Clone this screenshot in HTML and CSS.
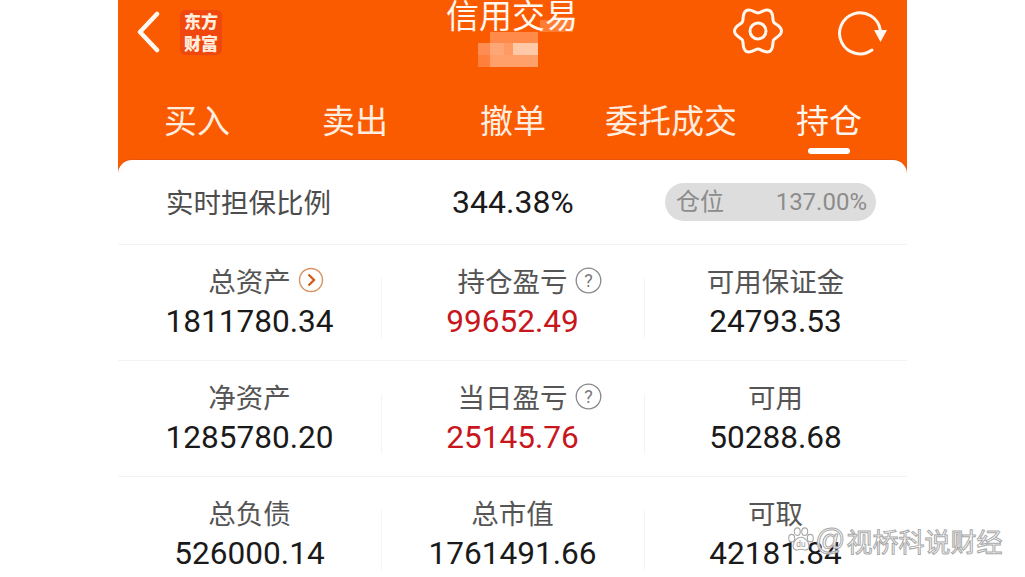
FILE: index.html
```html
<!DOCTYPE html>
<html lang="zh-CN">

<head>
    <meta charset="UTF-8">
    <title>信用交易</title>
    <link rel="stylesheet" href="styles.css">
</head>

<body>
    <div class="phone">
        <div class="header">
            <div class="top-bar">
                <div class="top-left">
                    <svg class="back" width="26" height="42" viewBox="0 0 26 42">
                        <path d="M21 3 L4 21 L21 39" fill="none" stroke="#fff7f0" stroke-width="4.5" stroke-linecap="round" stroke-linejoin="round"/>
                    </svg>
                    <div class="logo">东方<br>财富</div>
                </div>
                <div class="title-box">
                    <div class="title">信用交易</div>
                    <svg class="mosaic" width="98" height="47" viewBox="0 0 98 47">
                        <rect x="62" y="0" width="33" height="12" fill="#ff7d33"/>
                        <rect x="12" y="12" width="48" height="11" fill="#ff8a4a"/>
                        <rect x="0" y="23" width="12" height="12" fill="#ff8c52"/>
                        <rect x="12" y="23" width="14" height="12" fill="#ffa676"/>
                        <rect x="26" y="23" width="9" height="12" fill="#ff9a62"/>
                        <rect x="35" y="23" width="25" height="12" fill="#ffc8a6"/>
                        <rect x="0" y="35" width="12" height="12" fill="#ff7f3c"/>
                        <rect x="12" y="35" width="48" height="12" fill="#ffa06a"/>
                    </svg>
                </div>
                <div class="top-right">
                    <svg width="52" height="52" viewBox="-26 -26 52 52">
                        <path d="M23.5 0 C23.5,5 17.09,6.4 15.59,9 S16.08,17.85 11.75,20.35 S3,18 0,18 S-7.42,22.85 -11.75,20.35 S-14.09,11.6 -15.59,9 S-23.5,5 -23.5,0 S-17.09,-6.4 -15.59,-9 S-16.08,-17.85 -11.75,-20.35 S-3,-18 0,-18 S7.42,-22.85 11.75,-20.35 S14.09,-11.6 15.59,-9 S23.5,-5 23.5,0 Z" fill="none" stroke="#fff7f0" stroke-width="3" stroke-linejoin="round"/>
                        <circle r="8" fill="none" stroke="#fff7f0" stroke-width="3"/>
                    </svg>
                    <svg width="54" height="52" viewBox="0 0 54 52">
                        <path d="M38 45 A20.5 20.5 0 1 1 46.3 25" fill="none" stroke="#fff7f0" stroke-width="3" stroke-linecap="round"/>
                        <path d="M40 25 L53 25 L46.5 37 Z" fill="#fff7f0"/>
                    </svg>
                </div>
            </div>
            <div class="tabs">
                <div class="tab">买入</div>
                <div class="tab">卖出</div>
                <div class="tab">撤单</div>
                <div class="tab">委托成交</div>
                <div class="tab active">持仓</div>
            </div>
        </div>

        <div class="card">
            <div class="ratio-row">
                <div class="ratio-label">实时担保比例</div>
                <div class="ratio-value">344.38%</div>
                <div class="pill"><span class="pill-name">仓位</span><span>137.00%</span></div>
            </div>

            <div class="stat-row">
                <div class="stat">
                    <div class="label">总资产
                        <svg class="hint" width="26" height="26" viewBox="0 0 26 26">
                            <circle cx="13" cy="13" r="11.5" fill="none" stroke="#d9925f" stroke-width="1.4"/>
                            <path d="M10.5 7.5 L16 13 L10.5 18.5" fill="none" stroke="#d2601a" stroke-width="2.4"/>
                        </svg>
                    </div>
                    <div class="value">1811780.34</div>
                </div>
                <div class="stat">
                    <div class="label">持仓盈亏
                        <svg class="hint" width="27" height="27" viewBox="0 0 27 27">
                            <circle cx="13.5" cy="13.5" r="12.3" fill="none" stroke="#8a8a8a" stroke-width="1.3"/>
                            <text x="13.5" y="20" class="hint-mark">?</text>
                        </svg>
                    </div>
                    <div class="value red">99652.49</div>
                </div>
                <div class="stat">
                    <div class="label">可用保证金</div>
                    <div class="value">24793.53</div>
                </div>
            </div>

            <div class="stat-row">
                <div class="stat">
                    <div class="label">净资产</div>
                    <div class="value">1285780.20</div>
                </div>
                <div class="stat">
                    <div class="label">当日盈亏
                        <svg class="hint" width="27" height="27" viewBox="0 0 27 27">
                            <circle cx="13.5" cy="13.5" r="12.3" fill="none" stroke="#8a8a8a" stroke-width="1.3"/>
                            <text x="13.5" y="20" class="hint-mark">?</text>
                        </svg>
                    </div>
                    <div class="value red">25145.76</div>
                </div>
                <div class="stat">
                    <div class="label">可用</div>
                    <div class="value">50288.68</div>
                </div>
            </div>

            <div class="stat-row">
                <div class="stat">
                    <div class="label">总负债</div>
                    <div class="value">526000.14</div>
                </div>
                <div class="stat">
                    <div class="label">总市值</div>
                    <div class="value">1761491.66</div>
                </div>
                <div class="stat">
                    <div class="label">可取</div>
                    <div class="value">42181.84</div>
                </div>
            </div>
        </div>
    </div>

    <!-- watermark -->
    <div class="watermark">
        <svg width="28" height="26" viewBox="0 0 30 28">
            <g fill="#fff" stroke="#a8a8a8" stroke-width="1.2">
                <ellipse cx="5" cy="12" rx="3.2" ry="4"/>
                <ellipse cx="11" cy="5" rx="3.2" ry="4"/>
                <ellipse cx="19" cy="5" rx="3.2" ry="4"/>
                <ellipse cx="25" cy="12" rx="3.2" ry="4"/>
                <path d="M15 11 C20 11 25 18 23 23 C21 27 18 24 15 24 C12 24 9 27 7 23 C5 18 10 11 15 11 Z"/>
            </g>
            <text x="15" y="22" class="paw-text">du</text>
        </svg>
        <span class="at">@</span><span class="mark-name">视桥科说财经</span>
    </div>
</body>

</html>
```

FILE: styles.css
```css
html,
body {
    margin: 0;
    height: 577px;
    overflow: hidden;
    background-color: #ffffff;
    font-family: "Noto Sans CJK SC", "Noto Sans", sans-serif;
}

.phone {
    width: 789px;
    height: 577px;
    margin-left: 118px;
    overflow: hidden;
    background-color: #fb5b00;
}

/* Header */
.header {
    height: 160px;
    color: #ffeee0;
}

.top-bar {
    display: flex;
    justify-content: space-between;
    height: 84px;
    padding: 0 19px 0 18px;
}

.top-left {
    display: flex;
    align-items: center;
    gap: 18px;
    width: 200px;
    height: 64px;
}

.back {
    flex-shrink: 0;
}

.logo {
    width: 42px;
    height: 45px;
    border-radius: 6px;
    background-color: #f0470f;
    color: #ffeede;
    font-size: 17px;
    font-weight: 900;
    line-height: 22px;
    text-align: center;
}

.title-box {
    display: flex;
    flex-direction: column;
    align-items: center;
    width: 140px;
}

.title {
    position: relative;
    z-index: 1;
    height: 25px;
    margin-top: -5px;
    color: #fff7f0;
    font-size: 33px;
    font-weight: 400;
    line-height: 38px;
    white-space: nowrap;
}

.mosaic {
    flex-shrink: 0;
    margin-left: 30px;
}

.top-right {
    display: flex;
    justify-content: flex-end;
    align-items: center;
    gap: 50px;
    width: 200px;
    height: 62px;
}

.tabs {
    display: grid;
    grid-template-columns: repeat(5, 158px);
}

.tab {
    position: relative;
    height: 76px;
    font-size: 33px;
    font-weight: 400;
    line-height: 70px;
    text-align: center;
}

.tab.active {
    color: #fff7f0;
}

.tab.active::after {
    content: "";
    position: absolute;
    left: 58px;
    bottom: 6px;
    width: 42px;
    height: 6px;
    border-radius: 3px;
    background-color: #ffffff;
}

/* Card */
.card {
    height: 417px;
    border-radius: 14px 14px 0 0;
    background-color: #ffffff;
    box-shadow: 0 -1px 0 #e8560a;
}

.ratio-row {
    display: flex;
    align-items: center;
    height: 84px;
    border-bottom: 1px solid #f3f3f3;
}

.ratio-label {
    width: 334px;
    height: 42px;
    padding-left: 48px;
    box-sizing: border-box;
    color: #4d4d4d;
    font-size: 27.5px;
    font-weight: 400;
    line-height: 40px;
}

.ratio-value {
    width: 213px;
    color: #1a1a1a;
    font-family: Roboto, sans-serif;
    font-size: 32px;
    text-align: left;
}

.pill {
    display: flex;
    justify-content: space-between;
    align-items: center;
    width: 211px;
    height: 38px;
    padding: 0 9px 0 11px;
    box-sizing: border-box;
    border-radius: 19px;
    background-color: #dddddd;
    color: #8c8c8c;
    font-family: Roboto, "Noto Sans CJK SC", sans-serif;
    font-size: 24px;
    font-weight: 400;
}

.pill-name {
    margin-top: -5px;
}

.stat-row {
    display: grid;
    grid-template-columns: repeat(3, 263px);
    height: 115px;
    border-bottom: 1px solid #f3f3f3;
}

.stat {
    position: relative;
    display: flex;
    flex-direction: column;
    align-items: center;
    padding-top: 15px;
    box-sizing: border-box;
}

.stat + .stat::before {
    content: "";
    position: absolute;
    left: 0;
    top: 33px;
    width: 1px;
    height: 60px;
    background-color: #f4f4f4;
}

.label {
    position: relative;
    height: 40px;
    color: #555555;
    font-size: 27.5px;
    font-weight: 400;
    line-height: 40px;
}

.hint {
    position: absolute;
    left: calc(100% + 7px);
    top: 7px;
}

.hint-mark {
    fill: #777777;
    font-family: Roboto, sans-serif;
    font-size: 18px;
    text-anchor: middle;
}

.value {
    margin-top: 2px;
    color: #1a1a1a;
    font-family: Roboto, sans-serif;
    font-size: 31.6px;
    line-height: 40px;
}

.value.red {
    color: #c8161d;
}

/* Watermark */
.watermark {
    position: absolute;
    left: 787px;
    top: 522px;
    display: flex;
    align-items: center;
    height: 36px;
    color: rgba(255, 255, 255, 0.85);
    font-size: 26px;
    white-space: nowrap;
    -webkit-text-stroke: 1px #a8a8a8;
}

.at {
    font-family: "Liberation Sans", sans-serif;
    font-size: 30px;
}

.mark-name {
    margin-left: 1px;
}

.paw-text {
    fill: #999999;
    font-family: "Liberation Sans", sans-serif;
    font-size: 9px;
    text-anchor: middle;
    -webkit-text-stroke: 0;
}
```
